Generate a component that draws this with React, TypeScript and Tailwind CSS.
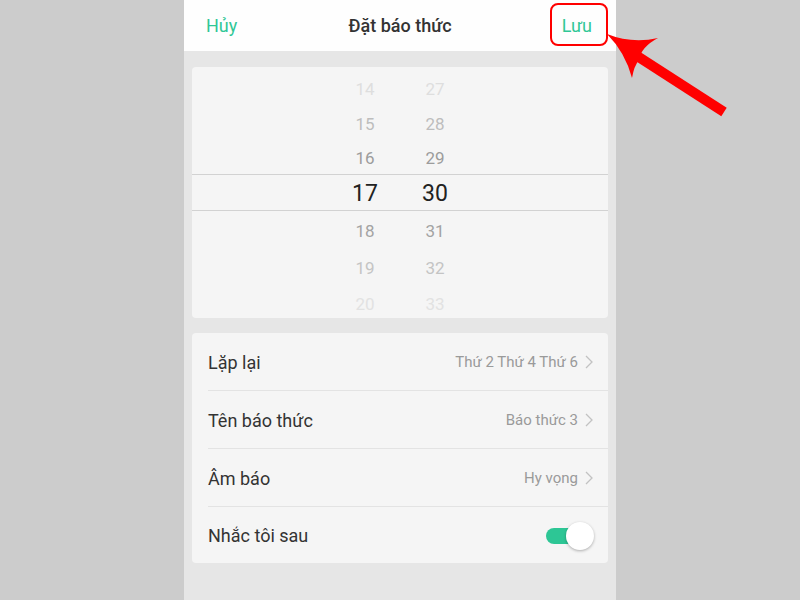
const hours = [
  { h: "14", m: "27", color: "text-[#dedede]", row: "h-[36px]" },
  { h: "15", m: "28", color: "text-[#bdbdbd]", row: "h-[35px]" },
  { h: "16", m: "29", color: "text-[#9c9c9c]", row: "h-[33px]" },
]

const lower = [
  { h: "18", m: "31", color: "text-[#a3a3a3]", row: "h-[39px]" },
  { h: "19", m: "32", color: "text-[#c4c4c4]", row: "h-[35px]" },
  { h: "20", m: "33", color: "text-[#e2e2e2]", row: "h-[36px]" },
]

const settings = [
  { label: "Lặp lại", value: "Thứ 2 Thứ 4 Thứ 6" },
  { label: "Tên báo thức", value: "Báo thức 3" },
  { label: "Âm báo", value: "Hy vọng" },
]

function PickerRow({ h, m, color, row }: { h: string; m: string; color: string; row: string }) {
  return (
    <div className={`flex items-center pl-[138px] pt-[3px] text-[17px] ${row} ${color}`}>
      <div className="w-[70px] text-center">{h}</div>
      <div className="w-[70px] text-center">{m}</div>
    </div>
  )
}

function Chevron() {
  return (
    <svg width="8" height="14" viewBox="0 0 8 14" fill="none">
      <path d="M1 1 L7 7 L1 13" stroke="#c2c2c2" strokeWidth="1.3" />
    </svg>
  )
}

export default function App() {
  return (
    <div
      className="relative flex h-[600px] w-full justify-center overflow-hidden bg-[#cccccc]"
      style={{ fontFamily: "Roboto, 'Noto Sans', sans-serif" }}
    >
      <div className="flex h-full w-[432px] flex-col bg-[#e6e6e6]">
        {/* Header */}
        <div className="relative flex h-[51px] items-center justify-between bg-[#fefefe] pl-[22px] pr-[24px] text-[18px]">
          <span className="text-[#30c796]">Hủy</span>
          <span className="absolute left-1/2 -translate-x-1/2 font-medium text-[#333333]">Đặt báo thức</span>
          <span className="text-[#30c796]">Lưu</span>
        </div>

        {/* Time picker */}
        <div className="mx-[8px] mt-[16px] h-[251px] overflow-hidden rounded-[4px] bg-[#f5f5f5] pt-[3px]">
          {hours.map((r) => (
            <PickerRow key={r.h} {...r} />
          ))}
          <div className="flex h-[37px] items-center border-y border-[#d2d2d2] pl-[138px] pt-[4px] text-[23px] text-[#222222]">
            <div className="w-[70px] text-center">17</div>
            <div className="w-[70px] text-center">30</div>
          </div>
          {lower.map((r) => (
            <PickerRow key={r.h} {...r} />
          ))}
        </div>

        {/* Settings */}
        <div className="mx-[8px] mt-[15px] rounded-[4px] bg-[#f5f5f5] pl-[16px]">
          {settings.map((s) => (
            <div key={s.label} className="flex h-[58px] items-center justify-between border-b border-[#e3e3e3] pr-[15px] pt-[1px]">
              <span className="text-[18px] text-[#333333]">{s.label}</span>
              <span className="flex items-center gap-[7px] text-[15px] text-[#9a9a9a]">
                {s.value}
                <Chevron />
              </span>
            </div>
          ))}
          <div className="flex h-[56px] items-center justify-between pr-[14px] pt-[1px]">
            <span className="text-[18px] text-[#333333]">Nhắc tôi sau</span>
            <div className="relative h-[28px] w-[48px]">
              <div className="absolute left-0 top-[6px] h-[16px] w-[34px] rounded-full bg-[#2dc695]" />
              <div className="absolute right-0 top-0 h-[28px] w-[28px] rounded-full bg-white shadow-[0_1px_3px_rgba(0,0,0,0.3)]" />
            </div>
          </div>
        </div>
      </div>

      {/* Annotation overlay */}
      <div className="absolute left-[550px] top-[3px] h-[43px] w-[58px] rounded-[8px] border-2 border-[#ff0000]" />
      <svg className="pointer-events-none absolute left-0 top-0" width="800" height="600" viewBox="0 0 800 600">
        <path d="M607 34 Q632 44 658 38 Q641 47 639 60 Q634 66 632 78 Q625 52 607 34 Z" fill="#ff0000" />
        <line x1="634" y1="54" x2="724" y2="112" stroke="#ff0000" strokeWidth="10" />
      </svg>
    </div>
  )
}
